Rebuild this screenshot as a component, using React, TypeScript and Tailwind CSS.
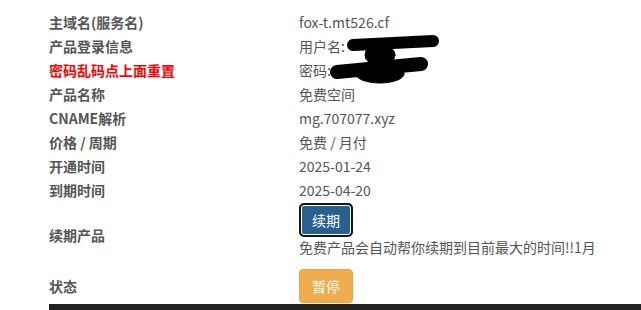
const font = { fontFamily: '"Microsoft YaHei", "Noto Sans CJK SC", "Noto Sans", sans-serif' };

interface Row {
  label: string;
  value: string;
  red?: boolean;
}

const rows: Row[] = [
  { label: '主域名(服务名)', value: 'fox-t.mt526.cf' },
  { label: '产品登录信息', value: '用户名:' },
  { label: '密码乱码点上面重置', value: '密码:', red: true },
  { label: '产品名称', value: '免费空间' },
  { label: 'CNAME解析', value: 'mg.707077.xyz' },
  { label: '价格 / 周期', value: '免费 / 月付' },
  { label: '开通时间', value: '2025-01-24' },
  { label: '到期时间', value: '2025-04-20' },
];

// marker scribble hiding the login details
function Scribble() {
  return (
    <svg className="absolute left-[330px] top-[34px]" width="115" height="50" viewBox="0 0 115 50">
      <g fill="#000" stroke="#000" strokeLinecap="round">
        <line x1="23" y1="11" x2="103" y2="7" strokeWidth="12" />
        <ellipse cx="50" cy="21" rx="15" ry="11" />
        <line x1="7" y1="38" x2="91" y2="30" strokeWidth="14" />
        <ellipse cx="50" cy="40" rx="24" ry="9" />
      </g>
    </svg>
  );
}

export default function App() {
  return (
    <div className="relative w-[641px] h-[310px] overflow-hidden bg-white text-[14px] text-[#555]" style={font}>
      <div className="pl-[49px] pt-[10px]">
        {rows.map((r) => (
          <div key={r.label} className="flex h-[24px] items-center leading-[20px]">
            <div className={`w-[250px] font-bold ${r.red ? 'text-[#ff0000]' : 'text-[#555]'}`}>{r.label}</div>
            <div>{r.value}</div>
          </div>
        ))}

        <div className="flex items-center py-px leading-[20px]">
          <div className="w-[250px] font-bold">续期产品</div>
          <div>
            <button className="h-[34px] rounded-[5px] border-2 border-[#151515] bg-[#286090] px-[11px] text-white shadow-[inset_0_0_0_1px_#fff]">
              续期
            </button>
            <p className="mb-[10px] h-[20px]">免费产品会自动帮你续期到目前最大的时间!!1月</p>
          </div>
        </div>

        <div className="flex items-center py-px leading-[20px]">
          <div className="w-[250px] font-bold">状态</div>
          <button className="h-[34px] rounded-[4px] border border-[#eea236] bg-[#f0ad4e] px-[12px] text-white">
            暂停
          </button>
        </div>

        <div className="h-[40px] bg-[#222]" />
      </div>
      <Scribble />
    </div>
  );
}
